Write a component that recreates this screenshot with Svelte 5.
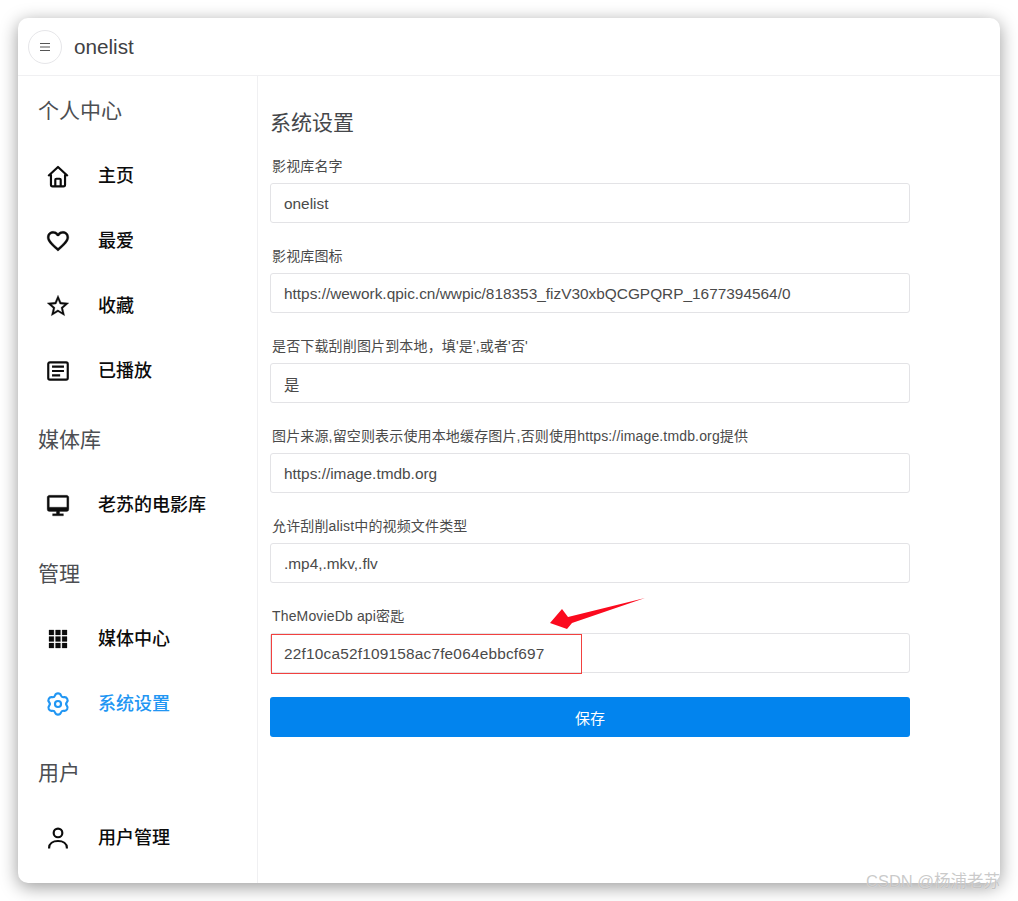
<script lang="ts">
  // six rounded lobes, pointy at top and bottom
  function cogOutline(): string {
    const pts: [number, number][] = []
    for (let i = 0; i < 6; i++) {
      const a = (i * 60 - 90) * Math.PI / 180
      const d = 12 * Math.PI / 180
      const v = 30 * Math.PI / 180
      pts.push([12 + 10 * Math.cos(a - d), 12 + 10 * Math.sin(a - d)])
      pts.push([12 + 10 * Math.cos(a + d), 12 + 10 * Math.sin(a + d)])
      pts.push([12 + 6.8 * Math.cos(a + v), 12 + 6.8 * Math.sin(a + v)])
    }
    const mid = (p: number[], q: number[]) => [(p[0] + q[0]) / 2, (p[1] + q[1]) / 2]
    const start = mid(pts[pts.length - 1], pts[0])
    let d = `M${start[0].toFixed(2)} ${start[1].toFixed(2)}`
    pts.forEach((p, i) => {
      const m = mid(p, pts[(i + 1) % pts.length])
      d += `Q${p[0].toFixed(2)} ${p[1].toFixed(2)} ${m[0].toFixed(2)} ${m[1].toFixed(2)}`
    })
    return d + 'Z'
  }

  const filled: Record<string, string> = {
    heart: 'M12.1 18.55L12 18.65L11.89 18.55C7.14 14.24 4 11.39 4 8.5C4 6.5 5.5 5 7.5 5C9.04 5 10.54 6 11.07 7.36H12.93C13.46 6 14.96 5 16.5 5C18.5 5 20 6.5 20 8.5C20 11.39 16.86 14.24 12.1 18.55M16.5 3C14.76 3 13.09 3.81 12 5.08C10.91 3.81 9.24 3 7.5 3C4.42 3 2 5.41 2 8.5C2 12.27 5.4 15.36 10.55 20.03L12 21.35L13.45 20.03C18.6 15.36 22 12.27 22 8.5C22 5.41 19.58 3 16.5 3Z',
    star: 'M12,15.39L8.24,17.66L9.23,13.38L5.91,10.5L10.29,10.13L12,6.09L13.71,10.13L18.09,10.5L14.77,13.38L15.76,17.66M22,9.24L14.81,8.63L12,2L9.19,8.63L2,9.24L7.45,13.97L5.82,21L12,17.27L18.18,21L16.54,13.97L22,9.24Z',
    monitor: 'M20,14H4V5H20M20,3H4C2.9,3 2,3.9 2,5V16A2,2 0 0,0 4,18H10.5V20H7V22H17V20H13.5V18H20A2,2 0 0,0 22,16V5C22,3.9 21.1,3 20,3Z',
    apps: 'M3.7 3.7H8.2V8.2H3.7ZM9.75 3.7H14.25V8.2H9.75ZM15.8 3.7H20.3V8.2H15.8ZM3.7 9.75H8.2V14.25H3.7ZM9.75 9.75H14.25V14.25H9.75ZM15.8 9.75H20.3V14.25H15.8ZM3.7 15.8H8.2V20.3H3.7ZM9.75 15.8H14.25V20.3H9.75ZM15.8 15.8H20.3V20.3H15.8Z',
  }

  const stroked: Record<string, string> = {
    home: 'M3 12L12 3.7L21 12M5.5 10.5V20a1.5 1.5 0 0 0 1.5 1.5H17a1.5 1.5 0 0 0 1.5-1.5V10.5M9.5 21.5V15.5a1 1 0 0 1 1-1h3a1 1 0 0 1 1 1V21.5',
    list: 'M4.5 4H19.5a1.5 1.5 0 0 1 1.5 1.5V18.5a1.5 1.5 0 0 1-1.5 1.5H4.5a1.5 1.5 0 0 1-1.5-1.5V5.5a1.5 1.5 0 0 1 1.5-1.5ZM6.5 8H17.5M6.5 12H17.5M6.5 16H14',
    cog: cogOutline() + 'M12 9.2A2.8 2.8 0 1 0 12 14.8A2.8 2.8 0 1 0 12 9.2Z',
    user: 'M12 3.3A4 4 0 1 0 12 11.3A4 4 0 1 0 12 3.3ZM3.8 21.7V21c0-3.8 3.5-6.2 8.2-6.2s8.2 2.4 8.2 6.2v.7',
  }

  const groups = [
    { title: '个人中心', items: [
      { icon: 'home', label: '主页' },
      { icon: 'heart', label: '最爱' },
      { icon: 'star', label: '收藏' },
      { icon: 'list', label: '已播放' },
    ] },
    { title: '媒体库', items: [{ icon: 'monitor', label: '老苏的电影库' }] },
    { title: '管理', items: [
      { icon: 'apps', label: '媒体中心' },
      { icon: 'cog', label: '系统设置', active: true },
    ] },
    { title: '用户', items: [{ icon: 'user', label: '用户管理' }] },
  ]

  const fields = [
    { label: '影视库名字', value: 'onelist' },
    { label: '影视库图标', value: 'https://wework.qpic.cn/wwpic/818353_fizV30xbQCGPQRP_1677394564/0' },
    { label: "是否下载刮削图片到本地，填'是',或者'否'", value: '是' },
    { label: '图片来源,留空则表示使用本地缓存图片,否则使用https://image.tmdb.org提供', value: 'https://image.tmdb.org' },
    { label: '允许刮削alist中的视频文件类型', value: '.mp4,.mkv,.flv' },
    { label: 'TheMovieDb api密匙', value: '22f10ca52f109158ac7fe064ebbcf697', marked: true },
  ]
</script>

<div class="page">
  <div class="window">
    <header class="topbar">
      <button class="menu-btn" aria-label="menu">
        <svg viewBox="0 0 10 8" width="10" height="8"><path d="M0 .5H10M0 4H10M0 7.5H10" stroke="#555" stroke-width="1" /></svg>
      </button>
      <span class="brand">onelist</span>
    </header>

    <div class="body">
      <nav class="sidebar">
        {#each groups as group}
          <div class="group-title">{group.title}</div>
          {#each group.items as item}
            <div class="nav-item" class:active={item.active}>
              <svg class="nav-icon" viewBox="0 0 24 24" width="26" height="26">
                {#if stroked[item.icon]}
                  <path class="line" d={stroked[item.icon]} />
                {:else}
                  <path class="solid" d={filled[item.icon]} />
                {/if}
              </svg>
              <span>{item.label}</span>
            </div>
          {/each}
        {/each}
      </nav>

      <main class="content">
        <h2>系统设置</h2>
        {#each fields as field}
          <div class="field" class:marked={field.marked}>
            <label>
              <span class="field-label">{field.label}</span>
              <input type="text" value={field.value} readonly />
            </label>
            {#if field.marked}
              <span class="mark"></span>
              <svg class="arrow" viewBox="0 0 100 44" width="100" height="44">
                <polygon points="2,36 14,22 20,30 97,11 24,36 19,42" fill="#fb0a1e" />
              </svg>
            {/if}
          </div>
        {/each}
        <button class="save">保存</button>
      </main>
    </div>
  </div>

  <span class="watermark">CSDN @杨浦老苏</span>
</div>

<style>
  :global(body) {
    background: #fff;
    font-family: "Liberation Sans", "Noto Sans CJK SC", sans-serif;
  }

  .page {
    position: relative;
    height: 901px;
    padding: 18px 0 0 18px;
    box-sizing: border-box;
    overflow: hidden;
  }

  .window {
    width: 982px;
    height: 865px;
    display: flex;
    flex-direction: column;
    background: #fff;
    border-radius: 10px;
    overflow: hidden;
    box-shadow: 0 4px 18px rgba(0, 0, 0, 0.4);
  }

  .topbar {
    height: 58px;
    box-sizing: border-box;
    flex-shrink: 0;
    display: flex;
    align-items: center;
    gap: 12px;
    padding-left: 10px;
    border-bottom: 1px solid #f0f0f2;
  }

  .menu-btn {
    width: 34px;
    height: 34px;
    padding: 0;
    display: flex;
    align-items: center;
    justify-content: center;
    background: #fff;
    border: 1px solid #e6e6e9;
    border-radius: 50%;
  }

  .brand {
    font-size: 20.7px;
    color: #3f4144;
  }

  .body {
    flex: 1;
    display: flex;
    min-height: 0;
  }

  .sidebar {
    width: 240px;
    flex-shrink: 0;
    padding-left: 20px;
    box-sizing: border-box;
    border-right: 1px solid #f0f0f2;
  }

  .group-title {
    padding: 21px 0 15px;
    line-height: 33px;
    font-size: 21px;
    color: #4c4e52;
  }

  .group-title:first-child {
    padding: 17.5px 0 15px;
  }

  .nav-item {
    height: 65px;
    display: flex;
    align-items: center;
    gap: 27px;
    padding-left: 7px;
    font-size: 18px;
    font-weight: 500;
    color: #0c0c0c;
  }

  .nav-item.active {
    color: #2196f3;
  }

  .nav-icon {
    fill: currentColor;
    margin-top: 3px;
    flex-shrink: 0;
  }

  .solid {
    stroke: currentColor;
    stroke-width: 0.25;
  }

  .line {
    fill: none;
    stroke: currentColor;
    stroke-width: 2;
    stroke-linejoin: round;
  }

  .content {
    flex: 1;
    padding-left: 12px;
  }

  h2 {
    margin: 0;
    padding: 32px 0 18px;
    font-size: 21px;
    line-height: 30px;
    font-weight: 400;
    color: #45474a;
  }

  .field {
    position: relative;
    width: 640px;
    margin-bottom: 23px;
  }

  .field label {
    display: block;
  }

  .field-label {
    display: block;
    padding-left: 2px;
    margin-bottom: 7px;
    font-size: 14px;
    line-height: 20px;
    letter-spacing: 0.15px;
    color: #4a4a4a;
  }

  .field input {
    display: block;
    width: 100%;
    height: 40px;
    box-sizing: border-box;
    padding: 1px 13px 0;
    border: 1px solid #e3e3e6;
    border-radius: 3px;
    outline: none;
    font: inherit;
    font-size: 15.4px;
    color: #4a4a4a;
  }

  .field.marked input {
    letter-spacing: 0.2px;
  }

  .mark {
    position: absolute;
    left: 1px;
    top: 28px;
    width: 311px;
    height: 40px;
    box-sizing: border-box;
    border: 1px solid #f2413f;
  }

  .arrow {
    position: absolute;
    left: 278px;
    top: -19px;
  }

  .save {
    display: block;
    width: 640px;
    height: 40px;
    margin-top: 24px;
    border: none;
    border-radius: 3px;
    background: #0284ee;
    color: #fff;
    font: inherit;
    font-size: 15px;
  }

  .watermark {
    position: absolute;
    left: 866px;
    top: 871px;
    font-size: 16.5px;
    line-height: 20px;
    color: rgba(150, 150, 150, 0.5);
    text-shadow: 0 0 1px rgba(255, 255, 255, 0.9);
  }
</style>
